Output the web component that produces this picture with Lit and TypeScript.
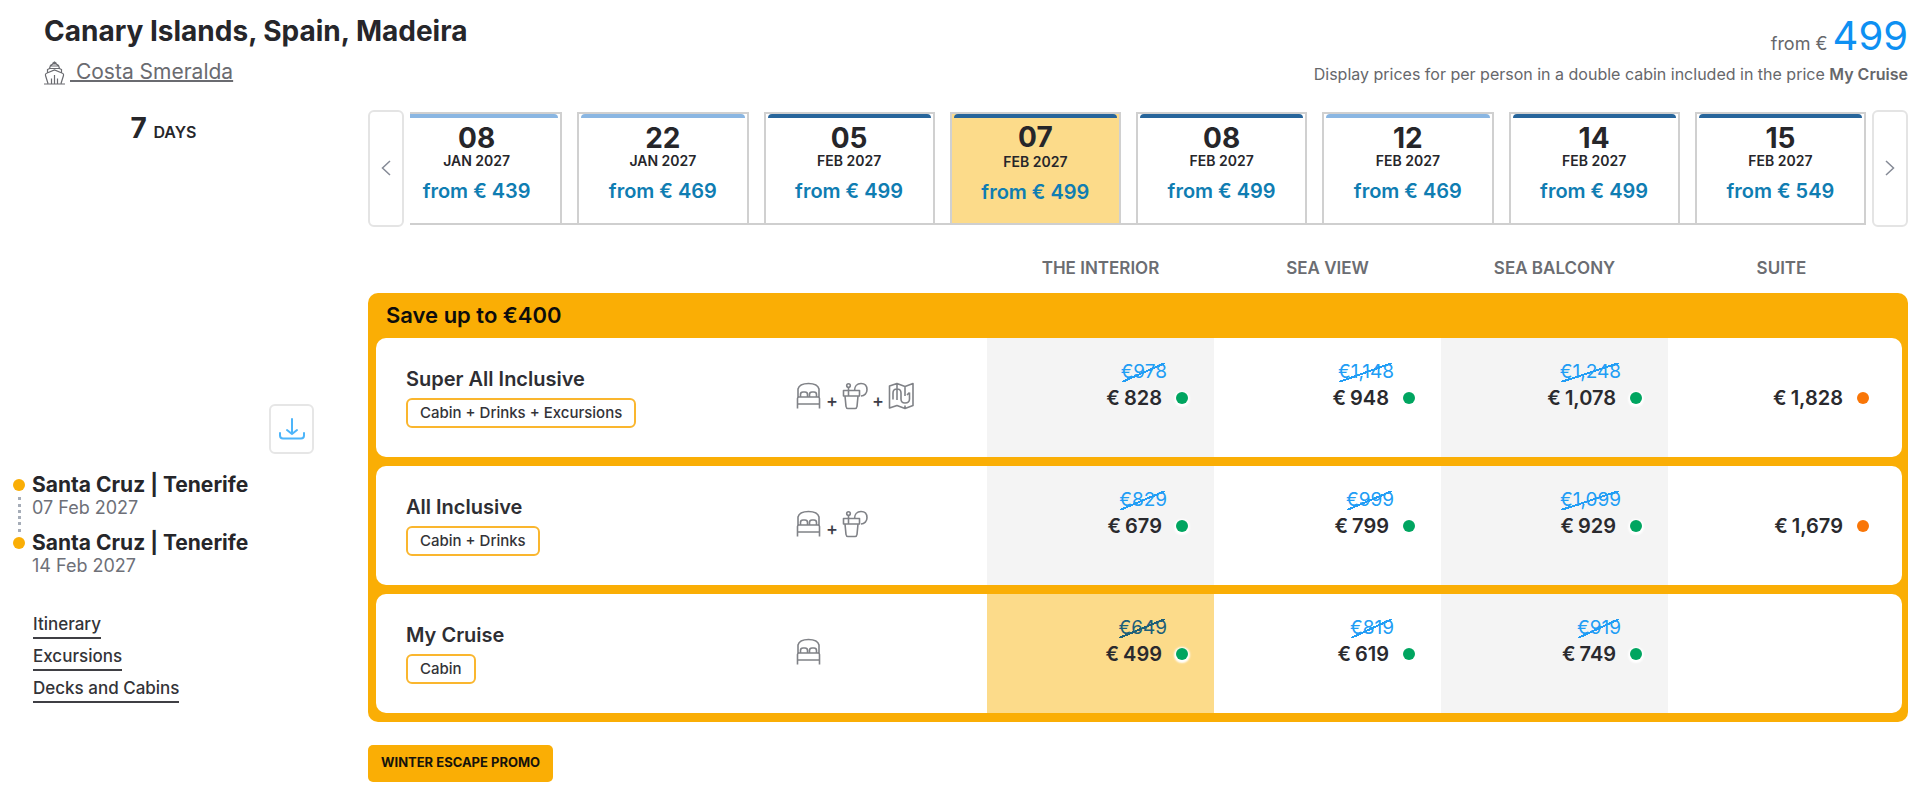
import { LitElement, html, css, svg, nothing } from "lit";
import { customElement } from "lit/decorators.js";
import { classMap } from "lit/directives/class-map.js";

type Departure = { day: string; month: string; price: number; tone: "light" | "dark"; selected?: boolean };
type Fare = { old?: string; price: string; low?: boolean; selected?: boolean } | null;
type Offer = { name: string; includes: string; icons: string[]; fares: Fare[] };

const departures: Departure[] = [
  { day: "08", month: "Jan 2027", price: 439, tone: "light" },
  { day: "22", month: "Jan 2027", price: 469, tone: "light" },
  { day: "05", month: "Feb 2027", price: 499, tone: "dark" },
  { day: "07", month: "Feb 2027", price: 499, tone: "dark", selected: true },
  { day: "08", month: "Feb 2027", price: 499, tone: "dark" },
  { day: "12", month: "Feb 2027", price: 469, tone: "light" },
  { day: "14", month: "Feb 2027", price: 499, tone: "dark" },
  { day: "15", month: "Feb 2027", price: 549, tone: "dark" },
];

const cabins = ["The Interior", "Sea View", "Sea Balcony", "Suite"];

const offers: Offer[] = [
  {
    name: "Super All Inclusive",
    includes: "Cabin + Drinks + Excursions",
    icons: ["bed", "drink", "map"],
    fares: [
      { old: "978", price: "828" },
      { old: "1,148", price: "948" },
      { old: "1,248", price: "1,078" },
      { price: "1,828", low: true },
    ],
  },
  {
    name: "All Inclusive",
    includes: "Cabin + Drinks",
    icons: ["bed", "drink"],
    fares: [
      { old: "829", price: "679" },
      { old: "999", price: "799" },
      { old: "1,099", price: "929" },
      { price: "1,679", low: true },
    ],
  },
  {
    name: "My Cruise",
    includes: "Cabin",
    icons: ["bed"],
    fares: [
      { old: "649", price: "499", selected: true },
      { old: "819", price: "619" },
      { old: "919", price: "749" },
      null,
    ],
  },
];

const stops = [
  { port: "Santa Cruz | Tenerife", date: "07 Feb 2027" },
  { port: "Santa Cruz | Tenerife", date: "14 Feb 2027" },
];

const icons: Record<string, unknown> = {
  bed: svg`<path d="M2 15V7C3 3 7 1.500 12.500 1.500S22 3 23 7v8M1.500 26.500V16.500c0-1 .5-1.500 1.500-1.500h19c1 0 1.500.5 1.500 1.500v10M1.500 22h22M4.500 15v-2.500c0-1.500 1-2.500 2.500-2.500h2c1.500 0 2.500 1 2.500 2.500V15M13.500 15v-2.500c0-1.500 1-2.500 2.500-2.500h2c1.500 0 2.500 1 2.500 2.500V15"/>`,
  drink: svg`<path d="M1.500 8.500h16v5.500h-16zM3 14l1 10.500c.2 1.300.8 2 2 2h7c1.200 0 1.800-.7 2-2L16 14M6.500 14V5.500M12.500 8.500c0-4 2.500-7 6.500-7s6 2.800 6 6.200-2.500 6.300-6 6.300"/><circle cx="6.500" cy="3.500" r="1.800"/>`,
  map: svg`<path d="M1.500 4l7.500-2.500 8 3 8-3v22l-8 3-8-3-7.500 2.500zM9 1.500V18M17 4.500V14M17 23.500v3M5 17.500V11c0-2.500 1.500-4 4-4s4 1.500 4 4v6c0 2.500 1.500 4 4 4s4.500-1.500 4.500-4v-6.500M19 13l2.500-2.500"/>`,
};

@customElement("app-root")
export class AppRoot extends LitElement {
  static styles = css`
    :host {
      display: block;
      background: #fff;
      color: #26262a;
      font-family: Inter, "Open Sans", sans-serif;
      font-size: 16px;
    }
    * {
      box-sizing: border-box;
    }
    h1, p, ul, ol {
      margin: 0;
      padding: 0;
      list-style: none;
    }
    button {
      font: inherit;
      color: inherit;
      background: #fff;
      padding: 0;
      cursor: pointer;
    }
    svg {
      display: block;
      fill: none;
      stroke: currentColor;
    }
    .page {
      padding: 12px 8px 18px 13px;
    }
    .head {
      display: flex;
      justify-content: space-between;
      padding-left: 31px;
      margin-bottom: 24px;
    }
    .title {
      font-size: 28px;
      line-height: 38px;
      font-weight: 700;
      margin-bottom: 8px;
    }
    .ship {
      display: flex;
      gap: 5px;
      font-size: 21px;
      line-height: 28px;
      color: #6a6b70;
      text-decoration: none;
    }
    .ship span {
      white-space: pre;
      text-decoration: underline;
      text-decoration-thickness: 2px;
    }
    .lead {
      text-align: right;
      color: #66676b;
    }
    .from {
      font-size: 18px;
      line-height: 20px;
      margin: 2px 0 4px;
    }
    .from strong {
      font-size: 40px;
      line-height: 44px;
      font-weight: 400;
      color: #0e90f2;
    }
    .note {
      font-size: 16px;
      line-height: 24px;
    }
    .note b {
      font-weight: 600;
    }
    .body {
      display: grid;
      grid-template-columns: 301px minmax(0, 1fr);
      gap: 54px;
    }
    .side {
      display: flex;
      flex-direction: column;
      align-items: flex-start;
      padding-top: 2px;
    }
    .days {
      align-self: center;
      font-size: 28px;
      line-height: 32px;
      font-weight: 700;
    }
    .days small {
      font-size: 16px;
      font-weight: 600;
      text-transform: uppercase;
    }
    .download {
      align-self: flex-end;
      display: grid;
      place-items: center;
      width: 45px;
      height: 50px;
      margin: 256px 0 19px;
      border: 2px solid #e6e6e6;
      border-radius: 6px;
      color: #4db5fa;
    }
    .stop {
      display: grid;
      grid-template-columns: 12px 1fr;
      column-gap: 7px;
      align-items: center;
    }
    .stop + .stop {
      margin-top: -1px;
    }
    .dot {
      width: 12px;
      height: 12px;
      border-radius: 50%;
      background: #faae05;
    }
    .port {
      font-size: 21px;
      line-height: 24px;
      font-weight: 700;
    }
    .when {
      font-size: 18px;
      line-height: 22px;
      color: #6e7078;
      padding-bottom: 13px;
      box-sizing: content-box;
    }
    .stop:last-child .when {
      padding-bottom: 0;
    }
    .trail {
      align-self: stretch;
      justify-self: center;
      border-left: 3px dotted #a6adb8;
    }
    .stop:last-child .trail {
      border: 0;
    }
    .links {
      display: grid;
      justify-items: start;
      gap: 6px;
      margin: 36px 0 0 20px;
    }
    .links a {
      display: block;
      font-size: 17px;
      line-height: 22px;
      font-weight: 500;
      padding-bottom: 2px;
      border-bottom: 2px solid #3f3f44;
      color: #333338;
      text-decoration: none;
    }
    .dates {
      display: flex;
      align-items: stretch;
      gap: 6px;
      margin-bottom: 29px;
    }
    .arrow {
      flex: none;
      display: grid;
      place-items: center;
      width: 36px;
      padding-bottom: 2px;
      border: 2px solid #e4e4e4;
      border-radius: 6px;
      color: #858a96;
    }
    .strip {
      flex: 1;
      min-width: 0;
      overflow: hidden;
      padding: 2px 0;
    }
    .track {
      display: grid;
      grid-template-columns: repeat(8, minmax(0, 1fr));
      gap: 15px;
      margin-left: -19px;
      border-bottom: 2px solid #cfcfcf;
    }
    .date {
      display: flex;
      flex-direction: column;
      align-items: center;
      height: 111px;
      padding: 0;
      border: 2px solid #d0d0d0;
      border-bottom: 0;
      background: #fff;
    }
    .date::before {
      content: "";
      align-self: stretch;
      height: 2px;
      margin: 0 2px 4px;
      border-top: 4px solid #8ab6e2;
      border-radius: 4px 4px 0 0;
    }
    .date.dark::before {
      border-top-color: #27659b;
    }
    .day {
      font-size: 28px;
      line-height: 28px;
      font-weight: 700;
    }
    .month {
      font-size: 14px;
      line-height: 18px;
      font-weight: 600;
      text-transform: uppercase;
    }
    .cost {
      margin-top: 9px;
      font-size: 20px;
      line-height: 24px;
      font-weight: 600;
      color: #0f7db2;
    }
    .date.selected {
      background: #fcdb8a;
    }
    .selected .day {
      line-height: 27px;
    }
    .selected .month {
      margin-top: 2px;
    }
    .offers,
    .offers thead,
    .offers tbody {
      display: block;
    }
    .offers tr {
      display: grid;
      grid-template-columns: 420fr 191fr repeat(4, 227fr);
      padding-right: 7px;
    }
    .offers td,
    .offers th {
      padding: 0;
      text-align: left;
      font-weight: inherit;
    }
    .offers thead {
      padding: 0 6px 0 8px;
      margin-bottom: 13px;
    }
    .offers .cabin {
      font-size: 17px;
      line-height: 24px;
      font-weight: 600;
      text-align: center;
      text-transform: uppercase;
      color: #6b6d72;
    }
    .offers tbody {
      background: #faae05;
      border-radius: 10px;
      padding: 0 6px 9px 8px;
    }
    .offers .saving {
      display: block;
      padding-left: 10px;
    }
    .saving th {
      display: block;
      height: 45px;
      font-size: 22px;
      line-height: 44px;
      font-weight: 600;
      color: #0c0c0c;
    }
    .offers .offer {
      height: 119px;
      background: #fff;
      border-radius: 10px;
    }
    .offer + .offer {
      margin-top: 9px;
    }
    .offers .plan {
      align-self: center;
      padding-left: 30px;
    }
    .name {
      font-size: 20px;
      line-height: 24px;
      font-weight: 600;
      margin-bottom: 7px;
      color: #2e2e33;
    }
    .tag {
      display: inline-block;
      height: 30px;
      padding: 0 12px;
      border: 2px solid #fab62e;
      border-radius: 6px;
      font-size: 15px;
      line-height: 25px;
      font-weight: 500;
      color: #333338;
      vertical-align: top;
    }
    .perks {
      display: flex;
      align-items: center;
      height: 115px;
      color: #808287;
    }
    .plus {
      width: 20px;
      padding-top: 10px;
      text-align: center;
      font-size: 18px;
      font-weight: 500;
      color: #3c3c48;
    }
    .fare {
      display: grid;
      grid-template-rows: 24px 24px;
      row-gap: 2px;
      align-content: start;
      justify-items: end;
    }
    .offers .fare {
      padding: 22px 26px 0 0;
    }
    .fare.shade {
      background: #f4f4f4;
    }
    .fare.selected {
      background: #fcdb8a;
    }
    .was {
      position: relative;
      margin-right: 21px;
      font-size: 19px;
      line-height: 24px;
      text-decoration: none;
      color: #219df5;
    }
    .was::after {
      content: "";
      position: absolute;
      inset: 3px 2px 2px 1px;
      background: linear-gradient(to top left, transparent calc(50% - 1px), currentColor calc(50% - 1px), currentColor calc(50% + 1px), transparent calc(50% + 1px));
    }
    .selected .was {
      color: #1d5f79;
    }
    .now {
      grid-row: 2;
      display: flex;
      align-items: center;
      gap: 4px;
      font-size: 20px;
      line-height: 24px;
      font-weight: 600;
      color: #2a2a2e;
    }
    .status {
      width: 12px;
      height: 12px;
      margin-left: 10px;
      border-radius: 50%;
      background: #00a560;
      box-shadow: 0 1px 2px 2px #fff;
    }
    .status.low {
      background: #f97607;
    }
    .promo {
      display: inline-block;
      margin-top: 23px;
      padding: 0 13px 2px;
      border-radius: 5px;
      background: #faae05;
      font-size: 13px;
      line-height: 35px;
      font-weight: 700;
      text-transform: uppercase;
      color: #15130c;
    }
  `;

  private fare(fare: Fare, index: number) {
    const classes = { fare: true, shade: index % 2 === 0, selected: !!fare?.selected };
    return html`<td class=${classMap(classes)}>
      ${fare?.old ? html`<del class="was">€${fare.old}</del>` : nothing}
      ${fare
        ? html`<span class="now"><span>€</span><span>${fare.price}</span><i class=${classMap({ status: true, low: !!fare.low })}></i></span>`
        : nothing}
    </td>`;
  }

  private perks(names: string[]) {
    return names.map(
      (name, i) => html`${i ? html`<span class="plus">+</span>` : nothing}
        <svg width="26" height="28" viewBox="0 0 26 28" stroke-width="1.600" stroke-linejoin="round" aria-hidden="true">${icons[name]}</svg>`
    );
  }

  render() {
    return html`<main class="page">
      <header class="head">
        <div>
          <h1 class="title">Canary Islands, Spain, Madeira</h1>
          <a class="ship" href="#ship">
            <svg width="21" height="28" viewBox="0 0 21 28" stroke-width="1.200" aria-hidden="true">
              <path d="M0 26h21M4 25.500L1.500 17.500c-.3-1 0-1.800 1-2.200L10.500 12l8 3.300c1 .4 1.300 1.200 1 2.200L17 25.500M3.500 15V11.500l2-1 1-3 4-2.500 4 2.500 1 3 2 1V15M5.500 10.500h10M6.500 8h8M8.500 6h4M10.500 17v9M7.500 25.500v-5M13.500 25.500v-5M8.500 5.500L10.500 4l2 1.500"/>
            </svg>
            <span> Costa Smeralda</span>
          </a>
        </div>
        <div class="lead">
          <p class="from">from € <strong>499</strong></p>
          <p class="note">Display prices for per person in a double cabin included in the price <b>My Cruise</b></p>
        </div>
      </header>
      <div class="body">
        <aside class="side">
          <p class="days">7 <small>Days</small></p>
          <button class="download" aria-label="Download">
            <svg width="26" height="22" viewBox="0 0 26 22" stroke-width="2" stroke-linecap="round" stroke-linejoin="round">
              <path d="M13 1v15M8 12l5 4 5-4M1 15v2.500c0 2 1 3 3 3h18c2 0 3-1 3-3V15"/>
            </svg>
          </button>
          <ol>
            ${stops.map(
              (s) => html`<li class="stop">
                <i class="dot"></i><span class="port">${s.port}</span>
                <i class="trail"></i><span class="when">${s.date}</span>
              </li>`
            )}
          </ol>
          <nav class="links">
            <a href="#itinerary">Itinerary</a>
            <a href="#excursions">Excursions</a>
            <a href="#decks">Decks and Cabins</a>
          </nav>
        </aside>
        <section>
          <div class="dates">
            <button class="arrow" aria-label="Earlier dates">
              <svg width="10" height="16" viewBox="0 0 10 16" stroke-width="1.500"><path d="M9 1L1.500 8 9 15"/></svg>
            </button>
            <div class="strip">
              <div class="track">
                ${departures.map(
                  (d) => html`<button class=${classMap({ date: true, dark: d.tone === "dark", selected: !!d.selected })}>
                    <span class="day">${d.day}</span>
                    <span class="month">${d.month}</span>
                    <span class="cost">from € ${d.price}</span>
                  </button>`
                )}
              </div>
            </div>
            <button class="arrow" aria-label="Later dates">
              <svg width="10" height="16" viewBox="0 0 10 16" stroke-width="1.500"><path d="M1 1l7.500 7L1 15"/></svg>
            </button>
          </div>
          <table class="offers">
            <thead>
              <tr>
                <td></td>
                <td></td>
                ${cabins.map((c) => html`<th class="cabin" scope="col">${c}</th>`)}
              </tr>
            </thead>
            <tbody>
              <tr class="saving"><th colspan="6">Save up to €400</th></tr>
              ${offers.map(
                (o) => html`<tr class="offer">
                  <th class="plan" scope="row">
                    <div class="name">${o.name}</div>
                    <span class="tag">${o.includes}</span>
                  </th>
                  <td class="perks">${this.perks(o.icons)}</td>
                  ${o.fares.map((f, i) => this.fare(f, i))}
                </tr>`
              )}
            </tbody>
          </table>
          <span class="promo">Winter Escape Promo</span>
        </section>
      </div>
    </main>`;
  }
}
